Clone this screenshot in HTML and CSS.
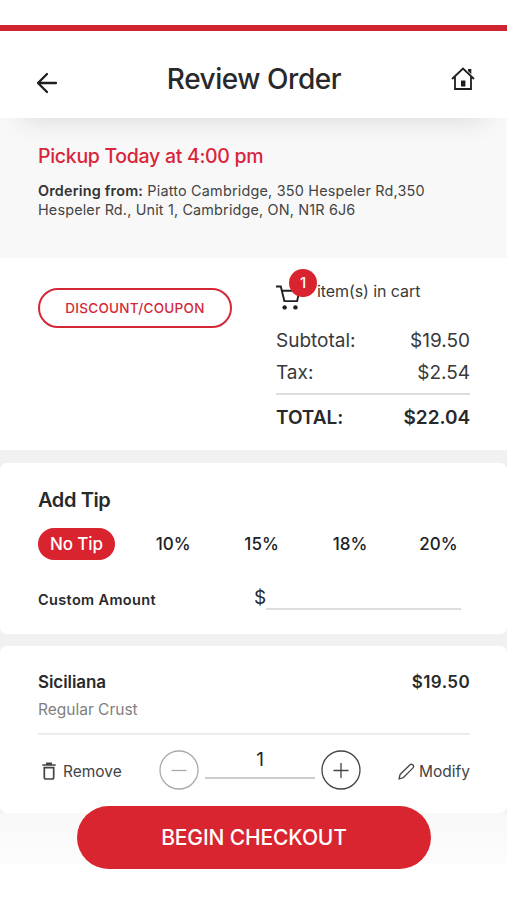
FILE: index.html
```html
<!DOCTYPE html>
<html lang="en">
<head>
<meta charset="utf-8">
<title>Review Order</title>
<link rel="stylesheet" href="styles.css">
</head>
<body>
<header class="header">
  <svg class="back" viewBox="0 0 22 22"><path d="M20 11H2M11 2L2 11L11 20"/></svg>
  <h1 class="title">Review Order</h1>
  <svg class="home" viewBox="0 0 24 24"><path d="M1 12L12 1.6L23 12M4 10V22H20V10"/><path class="solid" d="M10 13.5h4.4v6H10zM17 2h3.3v5.2L17 4z"/></svg>
</header>
<section class="pickup">
  <h2 class="pickup-time">Pickup Today at 4:00 pm</h2>
  <p class="address"><b>Ordering from:</b> Piatto Cambridge, 350 Hespeler Rd,350<br><span class="address-end">Hespeler Rd., Unit 1, Cambridge, ON, N1R 6J6</span></p>
</section>
<section class="summary">
  <button class="coupon">DISCOUNT/COUPON</button>
  <div class="totals">
    <div class="cart">
      <div class="cart-icon">
        <svg class="cart-svg" viewBox="0 0 26 26"><path d="M0 1.5H5L8.7 16.8H22L24.2 6H6.5"/><circle cx="9" cy="23.3" r="2.3"/><circle cx="20.2" cy="23.3" r="2.3"/></svg>
        <span class="badge">1</span>
      </div>
      <span class="cart-text">item(s) in cart</span>
    </div>
    <div class="line"><span>Subtotal:</span><span>$19.50</span></div>
    <div class="line"><span>Tax:</span><span>$2.54</span></div>
    <div class="line total"><span>TOTAL:</span><span>$22.04</span></div>
  </div>
</section>
<main class="cards">
  <section class="card tip">
    <h3 class="tip-title">Add Tip</h3>
    <div class="tips">
      <span class="chip active">No Tip</span><span class="chip">10%</span><span class="chip">15%</span><span class="chip">18%</span><span class="chip">20%</span>
    </div>
    <div class="custom"><span class="custom-label">Custom Amount</span><span class="dollar">$</span><span class="amount"></span></div>
  </section>
  <section class="card item">
    <div class="item-head"><span>Siciliana</span><span class="item-price">$19.50</span></div>
    <div class="crust">Regular Crust</div>
    <div class="actions">
      <span class="remove"><svg class="trash" viewBox="0 0 14 18"><path d="M.3 3H13.7M4 1.4H10M2.3 5.7V15.2Q2.3 17 4 17H10Q11.7 17 11.7 15.2V5.7Z"/></svg><span class="remove-text">Remove</span></span>
      <svg class="round minus" viewBox="0 0 40 40"><circle cx="20" cy="20" r="19"/><path d="M12.5 20.5H27.5"/></svg>
      <span class="qty">1</span>
      <svg class="round plus" viewBox="0 0 40 40"><circle cx="20" cy="20" r="19"/><path d="M12.5 20.5H27.5M20 13V28"/></svg>
      <span class="modify"><svg class="pencil" viewBox="0 0 17 17"><path d="M1 16L2.1 11.5L12 1.8Q13.3.5 14.7 1.8Q16.4 3.4 15 4.9L5.2 14.7Z"/></svg><span class="modify-text">Modify</span></span>
    </div>
  </section>
</main>
<footer class="footer"><button class="checkout">BEGIN CHECKOUT</button></footer>
</body>
</html>
```
FILE: styles.css
```css
* { box-sizing: border-box; }
body { margin: 0; height: 900px; overflow: hidden; background: #fff; color: #28292b; font-family: Inter, "Liberation Sans", sans-serif; }
h1, h2, h3, p { margin: 0; font-weight: 500; }
svg { display: block; flex: none; fill: none; stroke: currentColor; overflow: visible; }
span { white-space: nowrap; }
button { font-family: inherit; padding: 0; }

.header { position: relative; display: flex; align-items: flex-start; justify-content: space-between; height: 93px; margin-top: 25px; padding: 0 32px 0 36px; border-top: 6px solid #cf2530; background: #fff; box-shadow: 0 22px 28px -22px rgba(0,0,0,.14); }
.back { width: 22px; height: 22px; margin-top: 41px; stroke-width: 2.3; stroke-linecap: round; stroke-linejoin: round; color: #1e1e20; }
.title { margin-top: 30px; padding-right: 1px; font-size: 28px; line-height: 36px; letter-spacing: -.46px; }
.home { width: 24px; height: 24px; margin-top: 36px; stroke-width: 1.8; color: #1e1e20; }
.home .solid { fill: currentColor; stroke: none; }

.pickup { height: 140px; padding: 25px 38px 0; background: #f8f8f8; }
.pickup-time { color: #d9253a; font-size: 19.5px; line-height: 26px; font-weight: 450; letter-spacing: -.3px; }
.address { margin-top: 12px; font-size: 14.4px; line-height: 19px; font-weight: 400; color: #444; letter-spacing: .2px; white-space: nowrap; }
.address b { font-weight: 600; color: #333; }
.address-end { letter-spacing: .16px; }

.summary { display: flex; justify-content: space-between; height: 192px; padding: 0 37px 0 38px; }
.coupon { width: 194px; height: 40px; margin-top: 30px; border: 2px solid #d42838; border-radius: 20px; background: #fff; color: #d42838; font-size: 13.5px; font-weight: 550; letter-spacing: .28px; }
.totals { width: 194px; }
.cart { display: flex; height: 67px; }
.cart-icon { position: relative; width: 41px; padding-top: 27px; }
.cart-svg { width: 25px; height: 25px; stroke-width: 2; color: #202124; }
.cart-svg circle { fill: currentColor; stroke: none; }
.badge { position: absolute; left: 13px; top: 11px; width: 28px; height: 28px; border-radius: 50%; background: #d9232f; color: #fff; font-size: 15px; line-height: 28px; text-align: center; font-weight: 500; }
.cart-text { padding-top: 23px; font-size: 16px; line-height: 20px; letter-spacing: -.08px; color: #3b3b3b; }
.line { display: flex; justify-content: space-between; height: 32px; font-size: 19px; line-height: 32px; color: #38393b; }
.line.total { height: 47px; margin-top: 4px; border-top: 2px solid #ddd; line-height: 45px; font-weight: 600; color: #28292b; letter-spacing: -.05px; }

.cards { display: flex; flex-direction: column; gap: 12px; padding-top: 13px; background: #f1f1f1; }
.card { border-radius: 7px; background: #fff; padding: 0 37px 0 38px; }
.tip { height: 171px; padding-right: 24px; }
.tip-title { padding-top: 24px; font-size: 20px; line-height: 26px; font-weight: 600; letter-spacing: -.4px; }
.tips { display: grid; grid-template-columns: 91px repeat(4, 88.4px); margin-top: 15px; text-align: center; }
.chip { font-size: 17px; line-height: 32px; font-weight: 500; color: #202124; }
.chip.active { width: 77px; border-radius: 16px; background: #d9232f; color: #fff; letter-spacing: -.1px; }
.custom { display: flex; height: 50px; align-items: flex-end; }
.custom-label { width: 216px; padding-bottom: 1px; font-size: 14.5px; line-height: 18px; font-weight: 600; letter-spacing: .35px; }
.dollar { width: 12px; font-size: 19px; line-height: 24px; }
.amount { width: 195px; border-bottom: 2px solid #ddd; }
.item { height: 167px; }
.item-head { display: flex; justify-content: space-between; padding-top: 25px; font-size: 17px; line-height: 22px; font-weight: 600; letter-spacing: -.08px; }
.item-price { letter-spacing: .4px; }
.crust { margin-top: 7px; font-size: 15.5px; line-height: 20px; color: #808080; }
.actions { display: flex; height: 74px; margin-top: 13px; border-top: 2px solid #ececec; }
.remove { display: flex; width: 121px; padding: 27px 0 0 4px; color: #444; }
.trash { width: 14px; height: 18px; margin: 0 8px 0 0; stroke-width: 1.7; }
.remove-text, .modify-text { font-size: 15.5px; line-height: 20px; }
.remove-text { margin-left: -1px; }
.round { width: 40px; height: 40px; margin-top: 15px; stroke-width: 1.3; }
.minus { color: #aaa; }
.plus { color: #444; }
.qty { width: 110px; height: 44px; margin: 0 6px; border-bottom: 2px solid #ccc; text-align: center; font-size: 19px; line-height: 50px; }
.modify { display: flex; margin-left: auto; padding-top: 27px; color: #444; }
.pencil { width: 17px; height: 17px; margin: 1px 4px 0 0; stroke-width: 1.3; stroke-linejoin: round; }
.footer { height: 87px; background: linear-gradient(#f8f8f8, #fcfcfc 50px, #fff 51px); }
.checkout { position: relative; display: block; width: 354px; height: 63px; margin: 0 auto; top: -7px; left: .5px; border: 0; border-radius: 32px; background: #d9252f; color: #fff; font-size: 21px; font-weight: 500; letter-spacing: -.13px; }
```
